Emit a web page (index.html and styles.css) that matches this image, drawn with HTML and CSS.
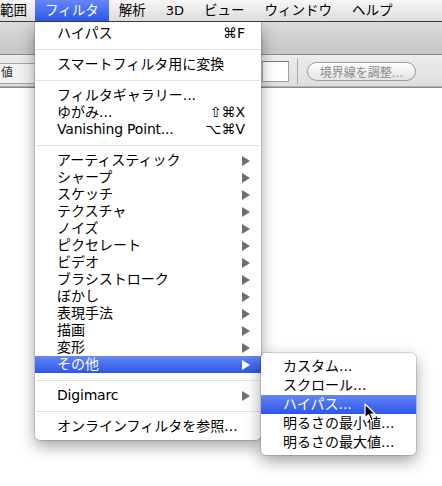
FILE: index.html
```html
<!DOCTYPE html>
<html lang="ja">
<head>
<meta charset="utf-8">
<title>フィルタ</title>
<link rel="stylesheet" href="styles.css">
</head>
<body>
<div class="screen">
  <div class="menubar">
    <span class="mb-item first">範囲</span>
    <span class="mb-item active">フィルタ</span>
    <span class="mb-item">解析</span>
    <span class="mb-item"><span class="lat-bar">3D</span></span>
    <span class="mb-item">ビュー</span>
    <span class="mb-item">ウィンドウ</span>
    <span class="mb-item">ヘルプ</span>
  </div>
  <div class="toolbar"></div>
  <div class="options">
    <div class="opt-left"><span class="cut">値</span></div>
    <div class="opt-spacer"></div>
    <div class="opt-field"></div>
    <div class="opt-divider"></div>
    <div class="opt-button">境界線を調整...</div>
  </div>

  <div class="menu main">
    <div class="item"><span>ハイパス</span><span class="key">⌘F</span></div>
    <div class="sep"></div>
    <div class="item"><span>スマートフィルタ用に変換</span></div>
    <div class="sep"></div>
    <div class="item"><span>フィルタギャラリー...</span></div>
    <div class="item"><span>ゆがみ...</span><span class="key">⇧⌘X</span></div>
    <div class="item"><span class="lat">Vanishing Point...</span><span class="key">⌥⌘V</span></div>
    <div class="sep"></div>
    <div class="item"><span>アーティスティック</span><span class="arrow"></span></div>
    <div class="item"><span>シャープ</span><span class="arrow"></span></div>
    <div class="item"><span>スケッチ</span><span class="arrow"></span></div>
    <div class="item"><span>テクスチャ</span><span class="arrow"></span></div>
    <div class="item"><span>ノイズ</span><span class="arrow"></span></div>
    <div class="item"><span>ピクセレート</span><span class="arrow"></span></div>
    <div class="item"><span>ビデオ</span><span class="arrow"></span></div>
    <div class="item"><span>ブラシストローク</span><span class="arrow"></span></div>
    <div class="item"><span>ぼかし</span><span class="arrow"></span></div>
    <div class="item"><span>表現手法</span><span class="arrow"></span></div>
    <div class="item"><span>描画</span><span class="arrow"></span></div>
    <div class="item"><span>変形</span><span class="arrow"></span></div>
    <div class="item hl"><span>その他</span><span class="arrow"></span></div>
    <div class="sep"></div>
    <div class="item"><span class="lat">Digimarc</span><span class="arrow"></span></div>
    <div class="sep"></div>
    <div class="item"><span>オンラインフィルタを参照...</span></div>
  </div>

  <div class="menu sub">
    <div class="item"><span>カスタム...</span></div>
    <div class="item"><span>スクロール...</span></div>
    <div class="item hl"><span>ハイパス...</span></div>
    <div class="item"><span>明るさの最小値...</span></div>
    <div class="item"><span>明るさの最大値...</span></div>
  </div>

  <svg class="cursor" width="14" height="20" viewBox="0 0 14 20">
    <path d="M1 1 L1 15 L4.5 11.8 L7.2 18 L9.4 17 L6.8 11 L11.2 11 Z" fill="#000" stroke="#fff" stroke-width="1.2" stroke-linejoin="round"/>
  </svg>
</div>
</body>
</html>
```

FILE: styles.css
```css
* {
  box-sizing: border-box;
  margin: 0;
  padding: 0;
}

html, body {
  width: 442px;
  height: 486px;
  overflow: hidden;
  background: #fff;
}

body {
  font-family: "DejaVu Sans", "Noto Sans CJK JP", sans-serif;
  color: #000;
}

.screen {
  position: relative;
  width: 442px;
  height: 486px;
  overflow: hidden;
  background: #fff;
}

.lat {
  font-family: "DejaVu Sans", sans-serif;
  font-size: 14px;
  letter-spacing: -0.2px;
}

.lat-bar {
  font-family: "DejaVu Sans", sans-serif;
  font-size: 13px;
}

/* menu bar */
.menubar {
  position: relative;
  z-index: 3;
  height: 22px;
  display: flex;
  background: linear-gradient(#f7f7f7, #dcdcdc);
  border-bottom: 1px solid #3a3a3a;
  font-size: 13.5px;
}

.mb-item {
  padding: 0 10px;
  line-height: 21px;
  white-space: nowrap;
}

.mb-item.first {
  padding: 0 8px 0 0;
}

.mb-item.active {
  background: linear-gradient(#6686f4, #2c56ea);
  color: #fff;
}

/* toolbar */
.toolbar {
  height: 33px;
  background: linear-gradient(#dbdbdb, #c5c5c5);
  border-bottom: 1px solid #8e8e8e;
}

.options {
  height: 33px;
  display: flex;
  align-items: center;
  padding-right: 26px;
  background: linear-gradient(#ececec, #dedede);
  border-bottom: 1px solid #8a8a8a;
  box-shadow: inset 0 -3px 0 -2px #b0b0b0;
}

.opt-left {
  width: 34px;
  height: 21px;
  margin-top: 4px;
  padding-left: 1px;
  background: #f2f2f2;
  border-top: 1px solid #a5a5a5;
  border-bottom: 1px solid #a5a5a5;
  overflow: hidden;
  font-size: 12px;
  line-height: 19px;
  color: #333;
}

.cut {
  display: inline-block;
}

.opt-spacer {
  flex: 1;
}

.opt-field {
  width: 27px;
  height: 21px;
  background: #fff;
  border: 1px solid #a0a0a0;
  border-top-color: #7c7c7c;
}

.opt-divider {
  width: 1px;
  height: 26px;
  margin-left: 8px;
  background: #a8a8a8;
}

.opt-button {
  width: 109px;
  height: 19px;
  margin-left: 9px;
  border: 1px solid #9c9c9c;
  border-radius: 10px;
  background: linear-gradient(#fefefe, #e4e4e4);
  font-size: 12px;
  color: #8c8c8c;
  display: flex;
  align-items: center;
  justify-content: center;
  white-space: nowrap;
}

/* menus */
.menu {
  position: absolute;
  background: #fff;
  font-size: 14px;
  box-shadow: 0 0 0 1px rgba(0, 0, 0, 0.12), 0 6px 16px rgba(0, 0, 0, 0.38);
}

.menu.main {
  left: 35px;
  top: 22px;
  width: 226px;
  padding: 3px 0 5px;
  border-radius: 0 0 5px 5px;
  z-index: 2;
}

.menu.sub {
  left: 261px;
  top: 353px;
  width: 155px;
  padding: 4px 0 3px;
  border-radius: 5px;
  z-index: 4;
}

.item {
  height: 17px;
  display: flex;
  align-items: center;
  justify-content: space-between;
  padding: 0 16px 0 22px;
  white-space: nowrap;
  line-height: 17px;
}

.sub .item {
  height: 19px;
  line-height: 19px;
}

.item.hl {
  background: linear-gradient(#6686f4, #2c56ea);
  color: #fff;
}

.key {
  font-family: "DejaVu Sans", sans-serif;
  font-size: 14px;
}

.sep {
  height: 14px;
  display: flex;
  align-items: center;
}

.sep::before {
  content: "";
  flex: 1;
  height: 1px;
  margin: 0 1px;
  background: #e1e1e1;
}

.arrow {
  width: 0;
  height: 0;
  border-left: 8px solid #6e6e6e;
  border-top: 5px solid transparent;
  border-bottom: 5px solid transparent;
  margin-right: -5px;
}

.hl .arrow {
  border-left-color: #fff;
}

.cursor {
  position: absolute;
  left: 364px;
  top: 403px;
  z-index: 5;
}
```
